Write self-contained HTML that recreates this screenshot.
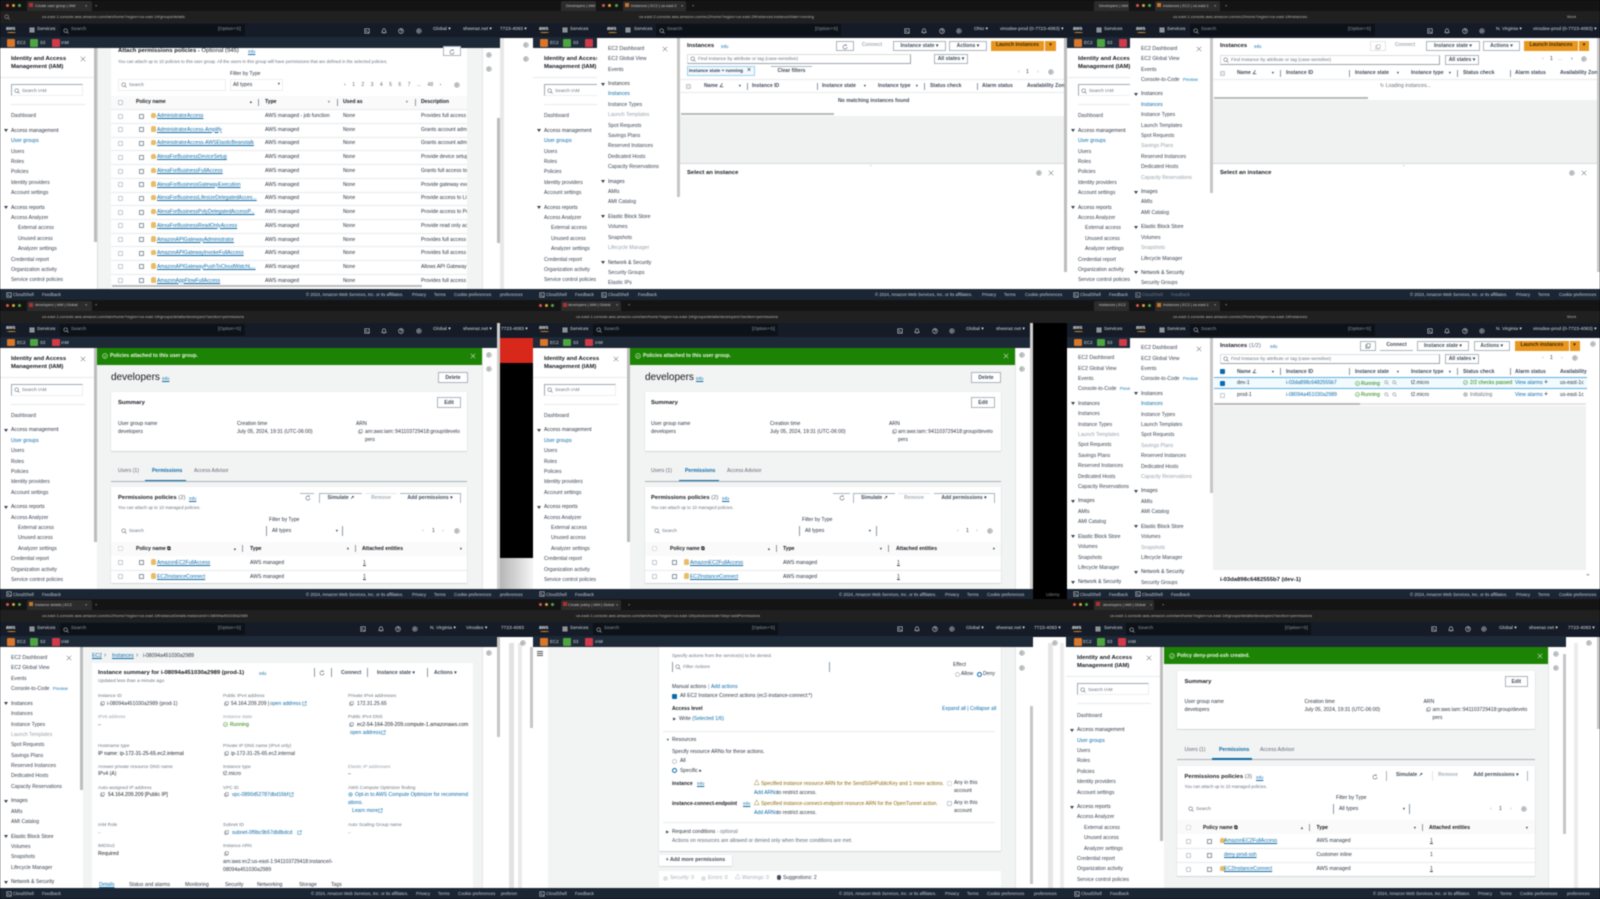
<!DOCTYPE html>
<html lang="en"><head><meta charset="utf-8"><title>AWS console contact sheet</title>
<style>
*{margin:0;padding:0;box-sizing:border-box}
html,body{width:1600px;height:899px;background:#000;overflow:hidden;font-family:"Liberation Sans",sans-serif}
#p{position:absolute;left:0;top:0;width:1600px;height:899px;filter:blur(.4px);overflow:hidden}
.row{position:absolute;left:0;width:1600px;height:300px;overflow:hidden;background:#000}
.w{position:absolute;top:0;height:300px;overflow:hidden}
.row s,.row a,.row b,.row i,.row svg,.row em{position:absolute;display:block;white-space:nowrap;font-size:5.1px;line-height:8px;color:#2b3440;text-decoration:none;font-style:normal}
.row b{font-weight:700;color:#16191f}
.row a{color:#0b6aa8;text-decoration:underline;text-decoration-thickness:.4px}
.row svg{width:6px;height:6px;fill:none;stroke:currentColor;stroke-width:1.4;color:#545f6b}
.row .h{font-size:5.9px}
.tb{left:0;top:0;width:1600px;height:11px;background:#141414}
.ab{left:0;top:11px;width:1600px;height:12px;background:#202020}
.l{width:3px;height:3px;top:4px;border-radius:50%}
.tab{top:1px;height:10px;background:#2c2c2c;border-radius:2px 2px 0 0}
.row .tt{font-size:3.8px;color:#c4c4c4;top:1.5px}
.row .ur{font-size:3.9px;color:#b8b8b8;top:13px;letter-spacing:.05px}
.row .nb{left:0;top:23px;height:14px;width:100%;background:#151c27}
.row .fb{left:0;top:37px;height:11px;width:100%;background:#1d2937}
.row .ft{left:0;top:289px;height:11px;width:100%;background:#1b2634}
.row .sr{left:60px;top:24px;width:185px;height:12px;background:#0d1219}
.row .n{color:#d5dbdb;top:26px;font-size:4.8px}
.row .nf{color:#d5dbdb;top:39px;font-size:4.4px}
.row .fo{color:#c5ccd3;top:291px;font-size:4.3px}
.row .aw{left:6px;top:24.5px;color:#e8e8e8;font-weight:700;font-size:5px}
.sm{left:7px;top:31.5px;width:9px;height:1px;background:#d88f2a;border-radius:50%}
.row .wi{color:#d5dbdb}
.ico{top:39px;width:7.5px;height:7.5px;border-radius:1px}
.nvl{position:absolute;left:0;width:80px}
.nvl p{height:10.4px;line-height:10.4px;padding-left:11px;font-size:5.1px;color:#38424f;white-space:nowrap;position:relative}
.nvl h6{margin-top:4.1px;height:10.4px;line-height:10.4px;padding-left:11px;font-size:5.1px;font-weight:400;color:#2b3440;white-space:nowrap;position:relative}
.nvl h6:before{content:"";position:absolute;left:4px;top:3.5px;border:2px solid transparent;border-top:3px solid #38424f;border-bottom:0}
.nvl .a{color:#0b6aa8}.nvl .in{padding-left:18px}.nvl .f{color:#98a2ab}
.row .nvl p em{position:static;display:inline;color:#0b7abf;font-size:4.2px;line-height:10.4px;margin-left:2px}
.btn{font-weight:700;text-align:center;border:.6px solid #aab4bd;background:#fff;color:#414d5c!important}
.off{color:#a6afb7!important;border-color:#e2e6e9}
.or{background:#e8961e;color:#3f2a08!important;font-weight:700;text-align:center}
.ln{height:.6px;background:#e8ebed}
.dv{width:.7px;height:7px;background:#8d99a5}
.row .d{font-size:3.8px;color:#414d5c}
.row .m{color:#6b7580;font-size:4.7px}
.ck{width:5px;height:5px;border:.6px solid #c0c8cf;background:#fff;border-radius:1px}
.gd{width:5px;height:5.5px;background:#e8bd68;border-radius:2px 2px 1px 1px}
.pi{width:5px;height:5px;border:.6px solid #8a95a0}
.gn{left:97px;top:48px;width:385px;height:17px;background:#1c8304}
</style></head><body>
<svg width="0" height="0" style="position:absolute"><defs>
<symbol id="s" viewBox="0 0 16 16"><circle cx="7" cy="7" r="4.8"/><path d="M10.5 10.5 15 15"/></symbol>
<symbol id="x" viewBox="0 0 16 16"><path d="M2 2l12 12M14 2 2 14"/></symbol>
<symbol id="g" viewBox="0 0 16 16"><circle cx="8" cy="8" r="6"/><circle cx="8" cy="8" r="2.2"/></symbol>
<symbol id="h" viewBox="0 0 16 16"><circle cx="8" cy="8" r="6.5"/><path d="M6 6.5c0-3 4.5-3 4.5 0 0 2-2.500 2-2.500 4"/></symbol>
<symbol id="b" viewBox="0 0 16 16"><path d="M8 2c-3 0-4 2-4 5 0 3-2 4-2 5h12c0-1-2-2-2-5 0-3-1-5-4-5zM6.500 14h3"/></symbol>
<symbol id="t" viewBox="0 0 16 16"><rect x="2" y="2" width="12" height="12"/><path d="M5 6l2.500 2L5 10M8.500 11H12"/></symbol>
<symbol id="r" viewBox="0 0 16 16"><path d="M13.500 8A5.500 5.500 0 1 1 11.500 3.800M11.500 1v3h-3"/></symbol>
<symbol id="c" viewBox="0 0 16 16"><rect x="5" y="2" width="9" height="9"/><path d="M5 5H2v9h9v-3"/></symbol>
<symbol id="e" viewBox="0 0 16 16"><path d="M7 3H2v11h11V9M9 2h5v5M14 2 7 9"/></symbol>
<symbol id="k" viewBox="0 0 16 16"><circle cx="8" cy="8" r="6.500"/><path d="M5 8l2.200 2.200L11 6"/></symbol>
<symbol id="m" viewBox="0 0 16 16"><path d="M2 2h3v3H2zM6.500 2h3v3h-3zM11 2h3v3h-3zM2 6.500h3v3H2zM6.500 6.500h3v3h-3zM11 6.500h3v3h-3zM2 11h3v3H2zM6.500 11h3v3h-3zM11 11h3v3h-3z"/></symbol>
</defs></svg>
<div id="p">

<!-- ROW 1 -->
<div class="row" style="top:0">
<i class="tb"></i><i class="ab"></i>
<i class="l" style="left:6px;background:#d9584c"></i><i class="l" style="left:12px;background:#d9a53c"></i><i class="l" style="left:18px;background:#4fa84a"></i>
<i class="tab" style="left:27px;width:65px"></i><i style="left:29px;top:3px;width:4px;height:4px;background:#b03030"></i><s class="tt" style="left:35px">Create user group | IAM</s><s class="tt" style="left:85px">×</s><s class="tt" style="left:95px">+</s>
<s class="ur" style="left:42px">us-east-1.console.aws.amazon.com/iam/home?region=us-east-1#/groups/details</s>
<svg style="left:4px;top:14px;color:#aaa"><use href="#s"/></svg>
<i class="tab" style="left:561px;width:35px"></i><s class="tt" style="left:566px">Developers | IAM</s>
<i class="l" style="left:602px;background:#d9584c"></i><i class="l" style="left:608px;background:#d9a53c"></i><i class="l" style="left:615px;background:#4fa84a"></i>
<i class="tab" style="left:623px;width:63px"></i><i style="left:625px;top:3px;width:4px;height:4px;background:#c8742a"></i><s class="tt" style="left:631px">Instances | EC2 | us-east-2</s><s class="tt" style="left:681px">×</s><s class="tt" style="left:692px">+</s>
<s class="ur" style="left:639px">us-east-2.console.aws.amazon.com/ec2/home?region=us-east-2#Instances:instanceState=running</s>
<i class="tab" style="left:1094px;width:35px"></i><s class="tt" style="left:1099px">Developers | IAM</s>
<i class="l" style="left:1136px;background:#d9584c"></i><i class="l" style="left:1142px;background:#d9a53c"></i><i class="l" style="left:1148px;background:#4fa84a"></i>
<i class="tab" style="left:1155px;width:65px"></i><i style="left:1157px;top:3px;width:4px;height:4px;background:#c8742a"></i><s class="tt" style="left:1163px">Instances | EC2 | us-east-1</s><s class="tt" style="left:1214px">×</s><s class="tt" style="left:1225px">+</s>
<s class="ur" style="left:1173px">us-east-1.console.aws.amazon.com/ec2/home?region=us-east-1#Instances:</s>
<s class="ur" style="left:1567px">Work</s>

<!-- strip 500-533 -->
<i style="left:500px;top:23px;width:33px;height:15px;background:#151c27"></i><i style="left:500px;top:38px;width:33px;height:251px;background:#fff"></i><i style="left:500px;top:38px;width:4px;height:251px;background:#e8e8e8"></i><i style="left:500px;top:289px;width:40px;height:11px;background:#1b2634"></i>
<s class="n wi" style="left:500px">7723-4083 ▾</s>
<svg style="left:523px;top:42px"><use href="#g"/></svg><svg style="left:523px;top:56px"><use href="#g"/></svg>
<s class="fo" style="left:500px">preferences</s>

<!-- win1 -->
<div class="w" style="left:0;width:500px">
<i style="left:0;top:48px;width:500px;height:241px;background:#fff"></i>
<i class="nb"></i><i class="fb"></i>
<s class="aw">aws</s><i class="sm"></i>
<svg style="left:29px;top:27px;color:#e6e6e6;stroke-width:1.200"><use href="#m"/></svg><s class="n" style="left:37px">Services</s>
<i class="sr"></i><svg style="left:63px;top:27.500px;color:#ccc"><use href="#s"/></svg><s class="n" style="left:71px;color:#8b96a1">Search</s><s class="n" style="left:218px;color:#8b96a1">[Option+S]</s>
<svg style="left:364px;top:28px;color:#e6e6e6"><use href="#t"/></svg><svg style="left:381px;top:28px;color:#e6e6e6"><use href="#b"/></svg><svg style="left:398px;top:28px;color:#e6e6e6"><use href="#h"/></svg><svg style="left:416px;top:28px;color:#e6e6e6"><use href="#g"/></svg>
<s class="n" style="left:433px">Global ▾</s><s class="n" style="left:463px">sheeraz.net ▾</s>
<i class="ico" style="left:7px;background:#d9772a"></i><s class="nf" style="left:17px">EC2</s><i class="ico" style="left:30px;background:#4fa53f"></i><s class="nf" style="left:40px">S3</s><i class="ico" style="left:52px;background:#d23a4a"></i><s class="nf" style="left:61px">IAM</s>

<b class="h" style="left:11px;top:55px">Identity and Access</b><b class="h" style="left:11px;top:63px">Management (IAM)</b>
<svg style="left:80px;top:56px"><use href="#x"/></svg>
<i class="ln" style="left:0;top:77px;width:94px"></i>
<i style="left:11px;top:84px;width:72px;height:12px;border:.6px solid #a0aab4;border-bottom-color:#eee;border-right-color:#eee"></i><svg style="left:14px;top:87.500px"><use href="#s"/></svg><s class="m" style="left:22px;top:86.500px">Search IAM</s>
<i class="ln" style="left:11px;top:104px;width:74px"></i>
<div class="nvl" style="top:111.300px"><p>Dashboard</p><h6>Access management</h6><p class="a">User groups</p><p>Users</p><p>Roles</p><p>Policies</p><p>Identity providers</p><p>Account settings</p><h6>Access reports</h6><p>Access Analyzer</p><p class="in">External access</p><p class="in">Unused access</p><p class="in">Analyzer settings</p><p>Credential report</p><p>Organization activity</p><p>Service control policies</p></div>
<i style="left:94px;top:48px;width:2.500px;height:194px;background:#bcbcbc"></i><i style="left:97px;top:48px;width:.7px;height:241px;background:#ddd"></i>
<i style="left:98px;top:48px;width:384px;height:241px;background:#f2f3f3"></i>
<i style="left:111px;top:48px;width:356px;height:241px;background:#fff"></i>
<b class="h" style="left:118px;top:47px">Attach permissions policies - <span style="font-weight:400">Optional (945)</span></b><a style="left:248px;top:48px;font-size:4.400px">Info</a>
<s class="m" style="left:118px;top:57.500px;font-size:4.400px">You can attach up to 10 policies to this user group. All the users in this group will have permissions that are defined in the selected policies.</s>
<i class="btn" style="left:443px;top:46px;width:18px;height:10px"></i><svg style="left:449px;top:48.500px"><use href="#r"/></svg>
<s style="left:230px;top:70px">Filter by Type</s>
<i style="left:118px;top:79px;width:108px;height:12px;background:#fff;border:.6px solid #eee"></i><svg style="left:121px;top:81.500px"><use href="#s"/></svg><s class="m" style="left:129px;top:80.500px">Search</s>
<i style="left:230px;top:79px;width:53px;height:12px;border:.6px solid #eee"></i><s style="left:233px;top:80.500px">All types</s><s class="d" style="left:277px;top:80px">▼</s>
<s style="left:344px;top:80.500px;word-spacing:5px;color:#5f6b77">‹ 1 2 3 4 5 6 7 ... 48 ›</s><svg style="left:454px;top:81.500px"><use href="#g"/></svg>
<i style="left:111px;top:96px;width:356px;height:13px;background:#fafafa"></i>
<i class="ck" style="left:118px;top:99.500px"></i><b style="left:136px;top:98px">Policy name</b><s class="d" style="left:249px;top:98px">▲</s><i class="dv" style="left:258px;top:98.500px"></i>
<b style="left:265px;top:98px">Type</b><s class="d" style="left:327px;top:98px;color:#888">▼</s><i class="dv" style="left:337px;top:98.500px"></i><b style="left:343px;top:98px">Used as</b><s class="d" style="left:405px;top:98px;color:#888">▼</s><i class="dv" style="left:415px;top:98.500px"></i><b style="left:421px;top:98px">Description</b>
<i class="ln" style="left:111px;top:109px;width:356px"></i><i class="ln" style="left:111px;top:123px;width:356px"></i><i class="ln" style="left:111px;top:136.500px;width:356px"></i><i class="ln" style="left:111px;top:150px;width:356px"></i><i class="ln" style="left:111px;top:164px;width:356px"></i><i class="ln" style="left:111px;top:178px;width:356px"></i><i class="ln" style="left:111px;top:191.500px;width:356px"></i><i class="ln" style="left:111px;top:205px;width:356px"></i><i class="ln" style="left:111px;top:219px;width:356px"></i><i class="ln" style="left:111px;top:232.500px;width:356px"></i><i class="ln" style="left:111px;top:246px;width:356px"></i><i class="ln" style="left:111px;top:260px;width:356px"></i><i class="ln" style="left:111px;top:273.500px;width:356px"></i>

<i class="ck" style="left:118px;top:113.500px"></i><i class="pi" style="left:139px;top:113.500px"></i><i class="gd" style="left:151px;top:112.500px"></i><a style="left:157px;top:112px">AdministratorAccess</a><s style="left:265px;top:112px">AWS managed - job function</s><s style="left:343px;top:112px">None</s><s style="left:421px;top:112px;width:46px;overflow:hidden">Provides full access to</s>
<i class="ck" style="left:118px;top:127px"></i><i class="pi" style="left:139px;top:127px"></i><i class="gd" style="left:151px;top:126px"></i><a style="left:157px;top:125.500px">AdministratorAccess-Amplify</a><s style="left:265px;top:125.500px">AWS managed</s><s style="left:343px;top:125.500px">None</s><s style="left:421px;top:125.500px;width:46px;overflow:hidden">Grants account administrative</s>
<i class="ck" style="left:118px;top:140.500px"></i><i class="pi" style="left:139px;top:140.500px"></i><i class="gd" style="left:151px;top:139.500px"></i><a style="left:157px;top:139px">AdministratorAccess-AWSElasticBeanstalk</a><s style="left:265px;top:139px">AWS managed</s><s style="left:343px;top:139px">None</s><s style="left:421px;top:139px;width:46px;overflow:hidden">Grants account administrative</s>
<i class="ck" style="left:118px;top:154.500px"></i><i class="pi" style="left:139px;top:154.500px"></i><i class="gd" style="left:151px;top:153.500px"></i><a style="left:157px;top:153px">AlexaForBusinessDeviceSetup</a><s style="left:265px;top:153px">AWS managed</s><s style="left:343px;top:153px">None</s><s style="left:421px;top:153px;width:46px;overflow:hidden">Provide device setup</s>
<i class="ck" style="left:118px;top:168.500px"></i><i class="pi" style="left:139px;top:168.500px"></i><i class="gd" style="left:151px;top:167.500px"></i><a style="left:157px;top:167px">AlexaForBusinessFullAccess</a><s style="left:265px;top:167px">AWS managed</s><s style="left:343px;top:167px">None</s><s style="left:421px;top:167px;width:46px;overflow:hidden">Grants full access to Alexa</s>
<i class="ck" style="left:118px;top:182px"></i><i class="pi" style="left:139px;top:182px"></i><i class="gd" style="left:151px;top:181px"></i><a style="left:157px;top:180.500px">AlexaForBusinessGatewayExecution</a><s style="left:265px;top:180.500px">AWS managed</s><s style="left:343px;top:180.500px">None</s><s style="left:421px;top:180.500px;width:46px;overflow:hidden">Provide gateway execution</s>
<i class="ck" style="left:118px;top:195.500px"></i><i class="pi" style="left:139px;top:195.500px"></i><i class="gd" style="left:151px;top:194.500px"></i><a style="left:157px;top:194px">AlexaForBusinessLifesizeDelegatedAcces...</a><s style="left:265px;top:194px">AWS managed</s><s style="left:343px;top:194px">None</s><s style="left:421px;top:194px;width:46px;overflow:hidden">Provide access to Lifesize</s>
<i class="ck" style="left:118px;top:209.500px"></i><i class="pi" style="left:139px;top:209.500px"></i><i class="gd" style="left:151px;top:208.500px"></i><a style="left:157px;top:208px">AlexaForBusinessPolyDelegatedAccessP...</a><s style="left:265px;top:208px">AWS managed</s><s style="left:343px;top:208px">None</s><s style="left:421px;top:208px;width:46px;overflow:hidden">Provide access to Poly</s>
<i class="ck" style="left:118px;top:223px"></i><i class="pi" style="left:139px;top:223px"></i><i class="gd" style="left:151px;top:222px"></i><a style="left:157px;top:221.500px">AlexaForBusinessReadOnlyAccess</a><s style="left:265px;top:221.500px">AWS managed</s><s style="left:343px;top:221.500px">None</s><s style="left:421px;top:221.500px;width:46px;overflow:hidden">Provide read only access</s>
<i class="ck" style="left:118px;top:237px"></i><i class="pi" style="left:139px;top:237px"></i><i class="gd" style="left:151px;top:236px"></i><a style="left:157px;top:235.500px">AmazonAPIGatewayAdministrator</a><s style="left:265px;top:235.500px">AWS managed</s><s style="left:343px;top:235.500px">None</s><s style="left:421px;top:235.500px;width:46px;overflow:hidden">Provides full access to</s>
<i class="ck" style="left:118px;top:250.500px"></i><i class="pi" style="left:139px;top:250.500px"></i><i class="gd" style="left:151px;top:249.500px"></i><a style="left:157px;top:249px">AmazonAPIGatewayInvokeFullAccess</a><s style="left:265px;top:249px">AWS managed</s><s style="left:343px;top:249px">None</s><s style="left:421px;top:249px;width:46px;overflow:hidden">Provides full access to</s>
<i class="ck" style="left:118px;top:264px"></i><i class="pi" style="left:139px;top:264px"></i><i class="gd" style="left:151px;top:263px"></i><a style="left:157px;top:262.500px">AmazonAPIGatewayPushToCloudWatchL...</a><s style="left:265px;top:262.500px">AWS managed</s><s style="left:343px;top:262.500px">None</s><s style="left:421px;top:262.500px;width:46px;overflow:hidden">Allows API Gateway to</s>
<i class="ck" style="left:118px;top:278px"></i><i class="pi" style="left:139px;top:278px"></i><i class="gd" style="left:151px;top:277px"></i><a style="left:157px;top:276.500px">AmazonAppFlowFullAccess</a><s style="left:265px;top:276.500px">AWS managed</s><s style="left:343px;top:276.500px">None</s><s style="left:421px;top:276.500px;width:46px;overflow:hidden">Provides full access to</s>
<i style="left:112px;top:285px;width:310px;height:2px;background:#bbb"></i>
<i style="left:482px;top:48px;width:15px;height:241px;background:#fff;border-left:.6px solid #e5e5e5"></i>
<svg style="left:486px;top:52px"><use href="#g"/></svg><svg style="left:486px;top:66px"><use href="#g"/></svg>
<i style="left:497px;top:118px;width:2.500px;height:125px;background:#bcbcbc"></i>
<i class="ft"></i><svg style="left:6px;top:291.500px;color:#ddd"><use href="#t"/></svg><s class="fo" style="left:13px">CloudShell</s><s class="fo" style="left:42px">Feedback</s>
<s class="fo" style="left:306px">© 2024, Amazon Web Services, Inc. or its affiliates.</s><s class="fo" style="left:412px">Privacy</s><s class="fo" style="left:434px">Terms</s><s class="fo" style="left:454px">Cookie preferences</s>
</div>

<!-- win2 behind (IAM clip) -->
<div class="w" style="left:533px;width:64px">
<i style="left:0;top:38px;width:64px;height:251px;background:#fff"></i><i class="nb"></i><i class="fb"></i>
<s class="aw">aws</s><i class="sm"></i><svg style="left:29px;top:27px;color:#e6e6e6;stroke-width:1.200"><use href="#m"/></svg><s class="n" style="left:37px">Services</s>
<i class="ico" style="left:7px;background:#d9772a"></i><s class="nf" style="left:17px">EC2</s><i class="ico" style="left:30px;background:#4fa53f"></i><s class="nf" style="left:40px">S3</s><i class="ico" style="left:52px;background:#d23a4a"></i>
<b class="h" style="left:11px;top:55px">Identity and Access</b><b class="h" style="left:11px;top:63px">Management (IAM)</b>
<i class="ln" style="left:0;top:77px;width:64px"></i>
<i style="left:11px;top:84px;width:60px;height:12px;border:.6px solid #a0aab4;border-bottom-color:#eee"></i><svg style="left:14px;top:87.500px"><use href="#s"/></svg><s class="m" style="left:22px;top:86.500px">Search IAM</s>
<i class="ln" style="left:11px;top:104px;width:60px"></i>
<div class="nvl" style="top:111.300px"><p>Dashboard</p><h6>Access management</h6><p class="a">User groups</p><p>Users</p><p>Roles</p><p>Policies</p><p>Identity providers</p><p>Account settings</p><h6>Access reports</h6><p>Access Analyzer</p><p class="in">External access</p><p class="in">Unused access</p><p class="in">Analyzer settings</p><p>Credential report</p><p>Organization activity</p><p>Service control policies</p></div>
<i class="ft"></i><svg style="left:6px;top:291.500px;color:#ddd"><use href="#t"/></svg><s class="fo" style="left:13px">CloudShell</s><s class="fo" style="left:42px">Feedback</s>
</div>

<!-- win2 front EC2 -->
<div class="w" style="left:597px;width:470px">
<i style="left:0;top:38px;width:470px;height:251px;background:#fff"></i><i class="nb" style="height:15px"></i>
<s class="aw" style="left:10px">aws</s><i class="sm" style="left:11px"></i><svg style="left:28px;top:27px;color:#e6e6e6;stroke-width:1.200"><use href="#m"/></svg><s class="n" style="left:37px">Services</s>
<i class="sr" style="left:59px"></i><svg style="left:62px;top:27.500px;color:#ccc"><use href="#s"/></svg><s class="n" style="left:70px;color:#8b96a1">Search</s><s class="n" style="left:218px;color:#8b96a1">[Option+S]</s>
<svg style="left:307px;top:28px;color:#e6e6e6"><use href="#t"/></svg><svg style="left:324px;top:28px;color:#e6e6e6"><use href="#b"/></svg><svg style="left:342px;top:28px;color:#e6e6e6"><use href="#h"/></svg><svg style="left:359px;top:28px;color:#e6e6e6"><use href="#g"/></svg>
<s class="n" style="left:377px">Ohio ▾</s><s class="n" style="left:403px">vinodee-prod (0-7723-4083) ▾</s>
<div class="nvl" style="top:43.800px"><p>EC2 Dashboard</p><p>EC2 Global View</p><p>Events</p><h6>Instances</h6><p class="a">Instances</p><p>Instance Types</p><p class="f">Launch Templates</p><p>Spot Requests</p><p>Savings Plans</p><p>Reserved Instances</p><p>Dedicated Hosts</p><p>Capacity Reservations</p><h6>Images</h6><p>AMIs</p><p>AMI Catalog</p><h6>Elastic Block Store</h6><p>Volumes</p><p>Snapshots</p><p class="f">Lifecycle Manager</p><h6>Network &amp; Security</h6><p>Security Groups</p><p>Elastic IPs</p></div>
<svg style="left:65px;top:46px"><use href="#x"/></svg>
<i style="left:80px;top:38px;width:2.500px;height:159px;background:#c6c6c6"></i>
<b class="h" style="left:90px;top:42px">Instances</b><a style="left:124px;top:43px;font-size:4.400px;text-decoration:none">Info</a>
<i class="btn" style="left:239px;top:41px;width:18px;height:10px"></i><svg style="left:245px;top:43.500px"><use href="#r"/></svg>
<s class="btn off" style="left:262px;top:41px;width:26px;height:10px;border:0">Connect</s>
<s class="btn" style="left:296px;top:41px;width:53px;height:10px">Instance state ▾</s>
<s class="btn" style="left:352px;top:41px;width:38px;height:10px">Actions ▾</s>
<s class="or" style="left:394px;top:41px;width:53px;height:10px">Launch instances</s><s class="or" style="left:448px;top:41px;width:11px;height:10px">▾</s>
<i style="left:90px;top:54px;width:224px;height:10px;border:.6px solid #9aa5af;border-left-color:#ddd;border-top-color:#ddd"></i><svg style="left:93px;top:56px"><use href="#s"/></svg><s class="m" style="left:101px;top:55px">Find Instance by attribute or tag (case-sensitive)</s>
<s class="btn" style="left:337px;top:54px;width:34px;height:10px">All states ▾</s>
<i style="left:90px;top:66px;width:68px;height:10px;background:#f1faff;border:.6px solid #9fd0ec"></i><s style="left:92px;top:67px;font-weight:700;color:#32404f;font-size:4.700px">Instance state = running</s><s style="left:150px;top:67px;font-size:7px">×</s>
<s class="btn" style="left:174px;top:66px;width:41px;height:10px;border-left:0;border-right:0;border-bottom:0">Clear filters</s>
<s style="left:421px;top:68px;color:#aaa">‹</s><s style="left:429px;top:68px">1</s><s style="left:440px;top:68px;color:#aaa">›</s><svg style="left:451px;top:69px"><use href="#g"/></svg>
<i class="ln" style="left:83px;top:79px;width:387px"></i>
<i class="ck" style="left:89px;top:83.500px;background:#e9ebed"></i>
<b style="left:107px;top:82px;color:#414d5c">Name ∠</b><s class="d" style="left:141px;top:82px">▼</s><i class="dv" style="left:150px;top:83px"></i><b style="left:155px;top:82px;color:#414d5c">Instance ID</b><i class="dv" style="left:220px;top:83px"></i><b style="left:225px;top:82px;color:#414d5c">Instance state</b><s class="d" style="left:266px;top:82px">▼</s><b style="left:281px;top:82px;color:#414d5c">Instance type</b><s class="d" style="left:318px;top:82px">▼</s><i class="dv" style="left:327px;top:83px"></i><b style="left:333px;top:82px;color:#414d5c">Status check</b><i class="dv" style="left:380px;top:83px"></i><b style="left:385px;top:82px;color:#414d5c">Alarm status</b><b style="left:430px;top:82px;color:#414d5c">Availability Zon</b>
<i class="ln" style="left:83px;top:92px;width:387px"></i>
<b style="left:241px;top:97px;color:#414d5c">No matching instances found</b>
<i style="left:84px;top:113px;width:153px;height:2px;background:#b8b8b8"></i>
<i style="left:83px;top:115.500px;width:387px;height:48px;background:#f0f1f1"></i>
<i class="ln" style="left:83px;top:163px;width:387px;background:#d5dbdb"></i>
<s class="d" style="left:272px;top:163px;color:#879596">⌃</s>
<b class="h" style="left:90px;top:169px">Select an instance</b>
<svg style="left:439px;top:170px"><use href="#g"/></svg><svg style="left:451px;top:170px"><use href="#x"/></svg>
<i style="left:467px;top:38px;width:2.500px;height:234px;background:#bdbdbd"></i>
<i class="ft"></i><svg style="left:4px;top:291.500px;color:#ddd"><use href="#t"/></svg><s class="fo" style="left:11px">CloudShell</s><s class="fo" style="left:41px">Feedback</s>
<s class="fo" style="left:278px">© 2024, Amazon Web Services, Inc. or its affiliates.</s><s class="fo" style="left:385px">Privacy</s><s class="fo" style="left:407px">Terms</s><s class="fo" style="left:428px">Cookie preferences</s>
</div>

<!-- win3 behind IAM -->
<div class="w" style="left:1067px;width:63px">
<i style="left:0;top:38px;width:63px;height:251px;background:#fff"></i><i class="nb"></i><i class="fb"></i>
<s class="aw">aws</s><i class="sm"></i><svg style="left:29px;top:27px;color:#e6e6e6;stroke-width:1.200"><use href="#m"/></svg><s class="n" style="left:37px">Services</s>
<i class="ico" style="left:7px;background:#d9772a"></i><s class="nf" style="left:17px">EC2</s><i class="ico" style="left:30px;background:#4fa53f"></i><s class="nf" style="left:40px">S3</s><i class="ico" style="left:52px;background:#d23a4a"></i>
<b class="h" style="left:11px;top:55px">Identity and Access</b><b class="h" style="left:11px;top:63px">Management (IAM)</b>
<i class="ln" style="left:0;top:77px;width:64px"></i>
<i style="left:11px;top:84px;width:60px;height:12px;border:.6px solid #a0aab4;border-bottom-color:#eee"></i><svg style="left:14px;top:87.500px"><use href="#s"/></svg><s class="m" style="left:22px;top:86.500px">Search IAM</s>
<i class="ln" style="left:11px;top:104px;width:60px"></i>
<div class="nvl" style="top:111.300px"><p>Dashboard</p><h6>Access management</h6><p class="a">User groups</p><p>Users</p><p>Roles</p><p>Policies</p><p>Identity providers</p><p>Account settings</p><h6>Access reports</h6><p>Access Analyzer</p><p class="in">External access</p><p class="in">Unused access</p><p class="in">Analyzer settings</p><p>Credential report</p><p>Organization activity</p><p>Service control policies</p></div>
<i class="ft"></i><svg style="left:6px;top:291.500px;color:#ddd"><use href="#t"/></svg><s class="fo" style="left:13px">CloudShell</s><s class="fo" style="left:42px">Feedback</s>
</div>

<!-- win3 front EC2 -->
<div class="w" style="left:1130px;width:470px">
<i style="left:0;top:38px;width:470px;height:251px;background:#fff"></i><i class="nb" style="height:15px"></i>
<s class="aw">aws</s><i class="sm"></i><svg style="left:29px;top:27px;color:#e6e6e6;stroke-width:1.200"><use href="#m"/></svg><s class="n" style="left:37px">Services</s>
<i class="sr"></i><svg style="left:63px;top:27.500px;color:#ccc"><use href="#s"/></svg><s class="n" style="left:71px;color:#8b96a1">Search</s><s class="n" style="left:218px;color:#8b96a1">[Option+S]</s>
<svg style="left:297px;top:28px;color:#e6e6e6"><use href="#t"/></svg><svg style="left:314px;top:28px;color:#e6e6e6"><use href="#b"/></svg><svg style="left:332px;top:28px;color:#e6e6e6"><use href="#h"/></svg><svg style="left:349px;top:28px;color:#e6e6e6"><use href="#g"/></svg>
<s class="n" style="left:366px">N. Virginia ▾</s><s class="n" style="left:403px">vinodee-prod (0-7723-4083) ▾</s>
<div class="nvl" style="top:43.800px"><p>EC2 Dashboard</p><p>EC2 Global View</p><p>Events</p><p>Console-to-Code <em>Preview</em></p><h6>Instances</h6><p class="a">Instances</p><p>Instance Types</p><p>Launch Templates</p><p>Spot Requests</p><p class="f">Savings Plans</p><p>Reserved Instances</p><p>Dedicated Hosts</p><p class="f">Capacity Reservations</p><h6>Images</h6><p>AMIs</p><p>AMI Catalog</p><h6>Elastic Block Store</h6><p>Volumes</p><p class="f">Snapshots</p><p>Lifecycle Manager</p><h6>Network &amp; Security</h6><p>Security Groups</p></div>
<svg style="left:66px;top:46px"><use href="#x"/></svg>
<i style="left:80px;top:38px;width:2.500px;height:155px;background:#c6c6c6"></i>
<b class="h" style="left:90px;top:42px">Instances</b><a style="left:124px;top:43px;font-size:4.400px;text-decoration:none">Info</a>
<i class="btn off" style="left:240px;top:41px;width:16px;height:10px"></i><svg style="left:245px;top:43.500px;color:#aaa"><use href="#c"/></svg>
<s class="btn off" style="left:262px;top:41px;width:26px;height:10px;border:0">Connect</s>
<s class="btn" style="left:296px;top:41px;width:54px;height:10px">Instance state ▾</s>
<s class="btn" style="left:353px;top:41px;width:37px;height:10px">Actions ▾</s>
<s class="or" style="left:394px;top:41px;width:54px;height:10px">Launch instances</s><s class="or" style="left:449px;top:41px;width:10px;height:10px">▾</s>
<i style="left:90px;top:55px;width:220px;height:10px;border:.6px solid #9aa5af;border-left-color:#ddd;border-top-color:#ddd"></i><svg style="left:93px;top:57px"><use href="#s"/></svg><s class="m" style="left:101px;top:56px">Find Instance by attribute or tag (case-sensitive)</s>
<s class="btn" style="left:315px;top:55px;width:34px;height:10px">All states ▾</s>
<s style="left:412px;top:55px;color:#aaa">‹</s><s style="left:420px;top:55px">1</s><s style="left:428px;top:55px;color:#999">...</s><s style="left:441px;top:55px">›</s><svg style="left:451px;top:55.500px"><use href="#g"/></svg>
<i class="ck" style="left:90px;top:70.500px;background:#e9ebed"></i>
<b style="left:107px;top:69px;color:#414d5c">Name ∠</b><s class="d" style="left:141px;top:69px">▼</s><i class="dv" style="left:150px;top:69.500px"></i><b style="left:156px;top:69px;color:#414d5c">Instance ID</b><i class="dv" style="left:219px;top:69.500px"></i><b style="left:225px;top:69px;color:#414d5c">Instance state</b><s class="d" style="left:266px;top:69px">▼</s><b style="left:281px;top:69px;color:#414d5c">Instance type</b><s class="d" style="left:318px;top:69px">▼</s><i class="dv" style="left:327px;top:69.500px"></i><b style="left:333px;top:69px;color:#414d5c">Status check</b><i class="dv" style="left:380px;top:69.500px"></i><b style="left:385px;top:69px;color:#414d5c">Alarm status</b><b style="left:430px;top:69px;color:#414d5c">Availability Zon</b>
<i class="ln" style="left:83px;top:79px;width:387px"></i>
<s style="left:250px;top:82px;color:#687078">↻ Loading instances...</s>
<i style="left:84px;top:96.500px;width:154px;height:2px;background:#b8b8b8"></i>
<i style="left:83px;top:100px;width:384px;height:63px;background:#f0f1f1"></i>
<i class="ln" style="left:83px;top:163px;width:387px;background:#d5dbdb"></i>
<s class="d" style="left:272px;top:163px;color:#879596">⌃</s>
<b class="h" style="left:90px;top:169px">Select an instance</b>
<svg style="left:439px;top:170px"><use href="#g"/></svg><svg style="left:451px;top:170px"><use href="#x"/></svg>
<i style="left:467px;top:38px;width:2.500px;height:234px;background:#c8c8c8"></i>
<i class="ft"></i><svg style="left:5px;top:291.500px;color:#aaa"><use href="#t"/></svg><s class="fo" style="left:12px;color:#6d7884">CloudShell</s><s class="fo" style="left:41px;color:#6d7884">Feedback</s>
<s class="fo" style="left:280px">© 2024, Amazon Web Services, Inc. or its affiliates.</s><s class="fo" style="left:386px">Privacy</s><s class="fo" style="left:408px">Terms</s><s class="fo" style="left:429px">Cookie preferences</s>
</div>
</div>

<!-- ROW 2 -->
<div class="row" style="top:299.700px">
<i class="tb"></i><i class="ab"></i>
<i class="l" style="left:6px;background:#d9584c"></i><i class="l" style="left:12px;background:#d9a53c"></i><i class="l" style="left:18px;background:#4fa84a"></i>
<i class="tab" style="left:27px;width:65px"></i><i style="left:29px;top:3px;width:4px;height:4px;background:#b03030"></i><s class="tt" style="left:35px">developers | IAM | Global</s><s class="tt" style="left:85px">×</s><s class="tt" style="left:95px">+</s>
<s class="ur" style="left:42px">us-east-1.console.aws.amazon.com/iam/home?region=us-east-1#/groups/details/developers?section=permissions</s>
<i class="l" style="left:539px;background:#d9584c"></i><i class="l" style="left:545px;background:#d9a53c"></i><i class="l" style="left:551px;background:#4fa84a"></i>
<i class="tab" style="left:561px;width:60px"></i><i style="left:563px;top:3px;width:4px;height:4px;background:#b03030"></i><s class="tt" style="left:568px">developers | IAM | Global</s><s class="tt" style="left:616px">×</s><s class="tt" style="left:628px">+</s>
<s class="ur" style="left:576px">us-east-1.console.aws.amazon.com/iam/home?region=us-east-1#/groups/details/developers?section=permissions</s>
<i class="tab" style="left:1094px;width:35px"></i><s class="tt" style="left:1099px">Instances | EC2</s>
<i class="l" style="left:1136px;background:#d9584c"></i><i class="l" style="left:1142px;background:#d9a53c"></i><i class="l" style="left:1148px;background:#4fa84a"></i>
<i class="tab" style="left:1155px;width:65px"></i><i style="left:1157px;top:3px;width:4px;height:4px;background:#c8742a"></i><s class="tt" style="left:1163px">Instances | EC2 | us-east-1</s><s class="tt" style="left:1214px">×</s><s class="tt" style="left:1225px">+</s>
<s class="ur" style="left:1173px">us-east-1.console.aws.amazon.com/ec2/home?region=us-east-1#Instances:</s>
<s class="ur" style="left:1567px">Work</s>
<!-- strip 500-533 -->
<i style="left:500px;top:23px;width:33px;height:15px;background:#151c27"></i><s class="n wi" style="left:501px">7723-4083 ▾</s>
<i style="left:500px;top:38px;width:33px;height:25px;background:#d8281c"></i>
<i style="left:500px;top:258px;width:33px;height:31px;background:linear-gradient(90deg,#b5b5b5,#f5f5f5)"></i>
<i style="left:500px;top:289px;width:40px;height:11px;background:#1b2634"></i><s class="fo" style="left:500px">preferences</s>
<s class="fo" style="left:1046px;color:#8a8a8a">Udemy</s>

<!-- win1 dev -->
<div class="w" style="left:0;width:500px">
<i style="left:0;top:48px;width:500px;height:241px;background:#fff"></i><i class="nb"></i><i class="fb"></i>
<s class="aw">aws</s><i class="sm"></i><svg style="left:29px;top:27px;color:#e6e6e6;stroke-width:1.200"><use href="#m"/></svg><s class="n" style="left:37px">Services</s>
<i class="sr"></i><svg style="left:63px;top:27.500px;color:#ccc"><use href="#s"/></svg><s class="n" style="left:71px;color:#8b96a1">Search</s><s class="n" style="left:218px;color:#8b96a1">[Option+S]</s>
<svg style="left:364px;top:28px;color:#e6e6e6"><use href="#t"/></svg><svg style="left:381px;top:28px;color:#e6e6e6"><use href="#b"/></svg><svg style="left:398px;top:28px;color:#e6e6e6"><use href="#h"/></svg><svg style="left:416px;top:28px;color:#e6e6e6"><use href="#g"/></svg>
<s class="n" style="left:433px">Global ▾</s><s class="n" style="left:463px">sheeraz.net ▾</s>
<i class="ico" style="left:7px;background:#d9772a"></i><s class="nf" style="left:17px">EC2</s><i class="ico" style="left:30px;background:#4fa53f"></i><s class="nf" style="left:40px">S3</s><i class="ico" style="left:52px;background:#d23a4a"></i><s class="nf" style="left:61px">IAM</s>
<b class="h" style="left:11px;top:55px">Identity and Access</b><b class="h" style="left:11px;top:63px">Management (IAM)</b><svg style="left:80px;top:56px"><use href="#x"/></svg>
<i class="ln" style="left:0;top:77px;width:94px"></i>
<i style="left:11px;top:84px;width:72px;height:12px;border:.6px solid #a0aab4;border-bottom-color:#eee;border-right-color:#eee"></i><svg style="left:14px;top:87.500px"><use href="#s"/></svg><s class="m" style="left:22px;top:86.500px">Search IAM</s>
<i class="ln" style="left:11px;top:104px;width:74px"></i>
<div class="nvl" style="top:111.300px"><p>Dashboard</p><h6>Access management</h6><p class="a">User groups</p><p>Users</p><p>Roles</p><p>Policies</p><p>Identity providers</p><p>Account settings</p><h6>Access reports</h6><p>Access Analyzer</p><p class="in">External access</p><p class="in">Unused access</p><p class="in">Analyzer settings</p><p>Credential report</p><p>Organization activity</p><p>Service control policies</p></div>
<i style="left:94px;top:48px;width:2.500px;height:194px;background:#bcbcbc"></i>
<i style="left:97px;top:48px;width:385px;height:241px;background:#f2f3f3"></i>
<i class="gn"></i><svg style="left:102px;top:53.500px;color:#dff5d8"><use href="#k"/></svg><b style="left:110px;top:52.500px;color:#e9f7e4">Policies attached to this user group.</b><svg style="left:470px;top:53.500px;color:#fff"><use href="#x"/></svg>
<s style="left:111px;top:73.500px;font-size:10px;line-height:10px;color:#16191f">developers</s><a style="left:162px;top:75px;font-size:4.400px">Info</a>
<s class="btn" style="left:438px;top:72px;width:30px;height:11px;line-height:10px">Delete</s>
<i style="left:111px;top:92px;width:356px;height:59px;background:#fff;box-shadow:0 .6px 1px #b8bec4"></i>
<b class="h" style="left:118px;top:99px">Summary</b><s class="btn" style="left:437px;top:97px;width:24px;height:11px;line-height:10px">Edit</s>
<s style="left:118px;top:120px">User group name</s><s style="left:118px;top:128px">developers</s>
<s style="left:237px;top:120px">Creation time</s><s style="left:237px;top:128px">July 05, 2024, 19:31 (UTC-06:00)</s>
<s style="left:356px;top:120px">ARN</s><svg style="left:358px;top:129px;width:5px;height:5px"><use href="#c"/></svg><s style="left:365px;top:128px">arn:aws:iam::941103729418:group/develo</s><s style="left:365px;top:136px">pers</s>
<s style="left:118px;top:167px;color:#5f6b77">Users (1)</s><a style="left:152px;top:167px;text-decoration:none;font-weight:700">Permissions</a><s style="left:194px;top:167px;color:#5f6b77">Access Advisor</s>
<i style="left:111px;top:181px;width:356px;height:.7px;background:#a9b2ba"></i><i style="left:145px;top:180px;width:41px;height:1.300px;background:#0b6aa8"></i>
<i style="left:111px;top:187px;width:356px;height:96px;background:#fff;box-shadow:0 .6px 1px #b8bec4"></i>
<b class="h" style="left:118px;top:194px">Permissions policies <span style="font-weight:400;color:#5f6b77">(2)</span></b><a style="left:189px;top:195px;font-size:4.400px">Info</a>
<s class="m" style="left:118px;top:204px;font-size:4.400px">You can attach up to 10 managed policies.</s>
<i class="btn" style="left:300px;top:193px;width:14px;height:10px;border-left:0;border-bottom:0;border-right:0"></i><svg style="left:305px;top:195px"><use href="#r"/></svg>
<s class="btn" style="left:319px;top:193px;width:43px;height:10px;border-bottom:0;border-right:0">Simulate ↗</s>
<s class="btn off" style="left:365px;top:193px;width:32px;height:10px;border-bottom:0;border-left:0;border-right:0">Remove</s>
<s class="btn" style="left:400px;top:193px;width:61px;height:10px;border-left:0;border-bottom:0">Add permissions ▾</s>
<s style="left:269px;top:216px">Filter by Type</s>
<svg style="left:121px;top:228px"><use href="#s"/></svg><s class="m" style="left:129px;top:227px">Search</s>
<i style="left:265.500px;top:226px;width:77px;height:10px;border-left:.7px solid #8d99a5;border-right:.7px solid #8d99a5"></i><s style="left:272px;top:227px">All types</s><s class="d" style="left:335px;top:227px">▼</s>
<s style="left:422px;top:227px;color:#aaa">‹</s><s style="left:432px;top:227px">1</s><s style="left:442px;top:227px;color:#aaa">›</s><svg style="left:454px;top:228px"><use href="#g"/></svg>
<i style="left:111px;top:242px;width:356px;height:14px;background:#fafafa"></i>
<i class="ck" style="left:118px;top:246.500px;border-color:#ddd"></i><b style="left:136px;top:245px">Policy name ⧉</b><s class="d" style="left:233px;top:245px">▲</s><i class="dv" style="left:242px;top:245.500px"></i><b style="left:250px;top:245px">Type</b><s class="d" style="left:346px;top:245px">▼</s><i class="dv" style="left:355px;top:245.500px"></i><b style="left:362px;top:245px">Attached entities</b><s class="d" style="left:459px;top:245px">▼</s>
<i class="ck" style="left:118px;top:260.500px"></i><i class="pi" style="left:139px;top:260.500px"></i><i class="gd" style="left:151px;top:259.500px"></i><a style="left:157px;top:259px">AmazonEC2FullAccess</a><s style="left:250px;top:259px">AWS managed</s><a style="left:363px;top:259px;color:#2b3440">1</a>
<i class="ln" style="left:111px;top:270px;width:356px"></i>
<i class="ck" style="left:118px;top:274.500px"></i><i class="pi" style="left:139px;top:274.500px"></i><i class="gd" style="left:151px;top:273.500px"></i><a style="left:157px;top:273px">EC2InstanceConnect</a><s style="left:250px;top:273px">AWS managed</s><a style="left:363px;top:273px;color:#2b3440">1</a>
<i style="left:482px;top:48px;width:15px;height:241px;background:#fff;border-left:.6px solid #e5e5e5"></i><svg style="left:486px;top:52px"><use href="#g"/></svg><svg style="left:486px;top:66px"><use href="#g"/></svg>
<i style="left:497px;top:23px;width:3px;height:266px;background:#d0d0d0"></i>
<i class="ft"></i><svg style="left:6px;top:291.500px;color:#ddd"><use href="#t"/></svg><s class="fo" style="left:13px">CloudShell</s><s class="fo" style="left:42px">Feedback</s>
<s class="fo" style="left:306px">© 2024, Amazon Web Services, Inc. or its affiliates.</s><s class="fo" style="left:412px">Privacy</s><s class="fo" style="left:434px">Terms</s><s class="fo" style="left:454px">Cookie preferences</s>
</div>

<!-- win2 dev -->
<div class="w" style="left:533px;width:500px">
<i style="left:0;top:48px;width:500px;height:241px;background:#fff"></i><i class="nb"></i><i class="fb"></i>
<s class="aw">aws</s><i class="sm"></i><svg style="left:29px;top:27px;color:#e6e6e6;stroke-width:1.200"><use href="#m"/></svg><s class="n" style="left:37px">Services</s>
<i class="sr"></i><svg style="left:63px;top:27.500px;color:#ccc"><use href="#s"/></svg><s class="n" style="left:71px;color:#8b96a1">Search</s><s class="n" style="left:219px;color:#8b96a1">[Option+S]</s>
<svg style="left:364px;top:28px;color:#e6e6e6"><use href="#t"/></svg><svg style="left:381px;top:28px;color:#e6e6e6"><use href="#b"/></svg><svg style="left:399px;top:28px;color:#e6e6e6"><use href="#h"/></svg><svg style="left:416px;top:28px;color:#e6e6e6"><use href="#g"/></svg>
<s class="n" style="left:433px">Global ▾</s><s class="n" style="left:463px">sheeraz.net ▾</s>
<i class="ico" style="left:7px;background:#d9772a"></i><s class="nf" style="left:17px">EC2</s><i class="ico" style="left:30px;background:#4fa53f"></i><s class="nf" style="left:40px">S3</s><i class="ico" style="left:52px;background:#d23a4a"></i><s class="nf" style="left:62px">IAM</s>
<b class="h" style="left:11px;top:55px">Identity and Access</b><b class="h" style="left:11px;top:63px">Management (IAM)</b><svg style="left:80px;top:56px"><use href="#x"/></svg>
<i class="ln" style="left:0;top:77px;width:94px"></i>
<i style="left:11px;top:84px;width:72px;height:12px;border:.6px solid #a0aab4;border-bottom-color:#eee;border-right-color:#eee"></i><svg style="left:14px;top:87.500px"><use href="#s"/></svg><s class="m" style="left:22px;top:86.500px">Search IAM</s>
<i class="ln" style="left:11px;top:104px;width:74px"></i>
<div class="nvl" style="top:111.300px"><p>Dashboard</p><h6>Access management</h6><p class="a">User groups</p><p>Users</p><p>Roles</p><p>Policies</p><p>Identity providers</p><p>Account settings</p><h6>Access reports</h6><p>Access Analyzer</p><p class="in">External access</p><p class="in">Unused access</p><p class="in">Analyzer settings</p><p>Credential report</p><p>Organization activity</p><p>Service control policies</p></div>
<i style="left:94px;top:48px;width:2.500px;height:194px;background:#bcbcbc"></i>
<i style="left:97px;top:48px;width:385px;height:241px;background:#f2f3f3"></i>
<i class="gn"></i><svg style="left:102px;top:53.500px;color:#dff5d8"><use href="#k"/></svg><b style="left:110px;top:52.500px;color:#e9f7e4">Policies attached to this user group.</b><svg style="left:470px;top:53.500px;color:#fff"><use href="#x"/></svg>
<s style="left:112px;top:73.500px;font-size:10px;line-height:10px;color:#16191f">developers</s><a style="left:163px;top:75px;font-size:4.400px">Info</a>
<s class="btn" style="left:438px;top:72px;width:30px;height:11px;line-height:10px">Delete</s>
<i style="left:112px;top:92px;width:356px;height:59px;background:#fff;box-shadow:0 .6px 1px #b8bec4"></i>
<b class="h" style="left:118px;top:99px">Summary</b><s class="btn" style="left:438px;top:97px;width:24px;height:11px;line-height:10px">Edit</s>
<s style="left:118px;top:120px">User group name</s><s style="left:118px;top:128px">developers</s>
<s style="left:237px;top:120px">Creation time</s><s style="left:237px;top:128px">July 05, 2024, 19:31 (UTC-06:00)</s>
<s style="left:356px;top:120px">ARN</s><svg style="left:359px;top:129px;width:5px;height:5px"><use href="#c"/></svg><s style="left:365px;top:128px">arn:aws:iam::941103729418:group/develo</s><s style="left:365px;top:136px">pers</s>
<s style="left:118px;top:167px;color:#5f6b77">Users (1)</s><a style="left:152px;top:167px;text-decoration:none;font-weight:700">Permissions</a><s style="left:194px;top:167px;color:#5f6b77">Access Advisor</s>
<i style="left:112px;top:181px;width:356px;height:.7px;background:#a9b2ba"></i><i style="left:145.500px;top:180px;width:40px;height:1.300px;background:#0b6aa8"></i>
<i style="left:112px;top:187px;width:356px;height:96px;background:#fff;box-shadow:0 .6px 1px #b8bec4"></i>
<b class="h" style="left:118px;top:194px">Permissions policies <span style="font-weight:400;color:#5f6b77">(2)</span></b><a style="left:189px;top:195px;font-size:4.400px">Info</a>
<s class="m" style="left:118px;top:204px;font-size:4.400px">You can attach up to 10 managed policies.</s>
<i class="btn" style="left:300px;top:193px;width:17px;height:10px;border-left:0;border-bottom:0;border-right:0"></i><svg style="left:306px;top:195px"><use href="#r"/></svg>
<s class="btn" style="left:320px;top:193px;width:42px;height:10px;border-bottom:0;border-right:0">Simulate ↗</s>
<s class="btn off" style="left:365px;top:193px;width:32px;height:10px;border-bottom:0;border-left:0;border-right:0">Remove</s>
<s class="btn" style="left:401px;top:193px;width:61px;height:10px;border-left:0;border-bottom:0">Add permissions ▾</s>
<s style="left:269px;top:216px">Filter by Type</s>
<svg style="left:121px;top:228px"><use href="#s"/></svg><s class="m" style="left:129px;top:227px">Search</s>
<i style="left:265.500px;top:226px;width:78px;height:10px;border-left:.7px solid #8d99a5;border-right:.7px solid #8d99a5"></i><s style="left:272px;top:227px">All types</s><s class="d" style="left:335px;top:227px">▼</s>
<s style="left:424px;top:227px;color:#aaa">‹</s><s style="left:433px;top:227px">1</s><s style="left:443px;top:227px;color:#aaa">›</s><svg style="left:454px;top:228px"><use href="#g"/></svg>
<i style="left:112px;top:242px;width:356px;height:14px;background:#fafafa"></i>
<i class="ck" style="left:119px;top:246.500px;border-color:#ddd"></i><b style="left:137px;top:245px">Policy name ⧉</b><s class="d" style="left:234px;top:245px">▲</s><i class="dv" style="left:243px;top:245.500px"></i><b style="left:250px;top:245px">Type</b><s class="d" style="left:346px;top:245px">▼</s><i class="dv" style="left:355px;top:245.500px"></i><b style="left:363px;top:245px">Attached entities</b><s class="d" style="left:459px;top:245px">▼</s>
<i class="ck" style="left:119px;top:260.500px"></i><i class="pi" style="left:139px;top:260.500px"></i><i class="gd" style="left:151px;top:259.500px"></i><a style="left:157px;top:259px">AmazonEC2FullAccess</a><s style="left:250px;top:259px">AWS managed</s><a style="left:364px;top:259px;color:#2b3440">1</a>
<i class="ln" style="left:112px;top:270px;width:356px"></i>
<i class="ck" style="left:119px;top:274.500px"></i><i class="pi" style="left:139px;top:274.500px"></i><i class="gd" style="left:151px;top:273.500px"></i><a style="left:157px;top:273px">EC2InstanceConnect</a><s style="left:250px;top:273px">AWS managed</s><a style="left:364px;top:273px;color:#2b3440">1</a>
<i style="left:482px;top:48px;width:15px;height:241px;background:#fff;border-left:.6px solid #e5e5e5"></i><svg style="left:486px;top:52px"><use href="#g"/></svg><svg style="left:486px;top:66px"><use href="#g"/></svg>
<i style="left:497px;top:23px;width:3px;height:266px;background:#d0d0d0"></i>
<i class="ft"></i><svg style="left:6px;top:291.500px;color:#ddd"><use href="#t"/></svg><s class="fo" style="left:13px">CloudShell</s><s class="fo" style="left:42px">Feedback</s>
<s class="fo" style="left:306px">© 2024, Amazon Web Services, Inc. or its affiliates.</s><s class="fo" style="left:412px">Privacy</s><s class="fo" style="left:434px">Terms</s><s class="fo" style="left:454px">Cookie preferences</s>
</div>

<!-- win3 behind EC2 -->
<div class="w" style="left:1067px;width:63px">
<i style="left:0;top:48px;width:63px;height:241px;background:#fff"></i><i class="nb"></i><i class="fb"></i>
<s class="aw">aws</s><i class="sm"></i><svg style="left:29px;top:27px;color:#e6e6e6;stroke-width:1.200"><use href="#m"/></svg><s class="n" style="left:37px">Services</s>
<i class="ico" style="left:7px;background:#d9772a"></i><s class="nf" style="left:17px">EC2</s><i class="ico" style="left:30px;background:#4fa53f"></i><s class="nf" style="left:40px">S3</s><i class="ico" style="left:52px;background:#d23a4a"></i>
<div class="nvl" style="top:53.500px"><p>EC2 Dashboard</p><p>EC2 Global View</p><p>Events</p><p>Console-to-Code <em>Preview</em></p><h6>Instances</h6><p>Instances</p><p>Instance Types</p><p class="f">Launch Templates</p><p>Spot Requests</p><p>Savings Plans</p><p>Reserved Instances</p><p>Dedicated Hosts</p><p>Capacity Reservations</p><h6>Images</h6><p>AMIs</p><p>AMI Catalog</p><h6>Elastic Block Store</h6><p>Volumes</p><p>Snapshots</p><p>Lifecycle Manager</p><h6>Network &amp; Security</h6></div>
<i class="ft"></i><svg style="left:6px;top:291.500px;color:#ddd"><use href="#t"/></svg><s class="fo" style="left:13px">CloudShell</s><s class="fo" style="left:42px">Feedback</s>
</div>

<!-- win3 front instances 1/2 -->
<div class="w" style="left:1130px;width:470px">
<i style="left:0;top:38px;width:470px;height:251px;background:#fff"></i><i class="nb" style="height:15px"></i>
<s class="aw">aws</s><i class="sm"></i><svg style="left:29px;top:27px;color:#e6e6e6;stroke-width:1.200"><use href="#m"/></svg><s class="n" style="left:37px">Services</s>
<i class="sr"></i><svg style="left:63px;top:27.500px;color:#ccc"><use href="#s"/></svg><s class="n" style="left:71px;color:#8b96a1">Search</s><s class="n" style="left:218px;color:#8b96a1">[Option+S]</s>
<svg style="left:297px;top:28px;color:#e6e6e6"><use href="#t"/></svg><svg style="left:314px;top:28px;color:#e6e6e6"><use href="#b"/></svg><svg style="left:332px;top:28px;color:#e6e6e6"><use href="#h"/></svg><svg style="left:349px;top:28px;color:#e6e6e6"><use href="#g"/></svg>
<s class="n" style="left:366px">N. Virginia ▾</s><s class="n" style="left:403px">vinodee-prod (0-7723-4083) ▾</s>
<div class="nvl" style="top:43.500px"><p>EC2 Dashboard</p><p>EC2 Global View</p><p>Events</p><p>Console-to-Code <em>Preview</em></p><h6>Instances</h6><p class="a">Instances</p><p>Instance Types</p><p>Launch Templates</p><p>Spot Requests</p><p class="f">Savings Plans</p><p>Reserved Instances</p><p>Dedicated Hosts</p><p class="f">Capacity Reservations</p><h6>Images</h6><p>AMIs</p><p>AMI Catalog</p><h6>Elastic Block Store</h6><p>Volumes</p><p class="f">Snapshots</p><p>Lifecycle Manager</p><h6>Network &amp; Security</h6><p>Security Groups</p></div>
<svg style="left:66px;top:46px"><use href="#x"/></svg>
<i style="left:80px;top:38px;width:2.500px;height:155px;background:#c6c6c6"></i>
<b class="h" style="left:90px;top:42px">Instances <span style="font-weight:400;color:#5f6b77">(1/2)</span></b><a style="left:140px;top:43px;font-size:4.400px;text-decoration:none">Info</a>
<i class="btn" style="left:229.500px;top:41px;width:16.500px;height:10px"></i><svg style="left:235px;top:43.500px"><use href="#c"/></svg>
<s class="btn" style="left:250px;top:41px;width:33px;height:10px;border-left:0;border-right:0;border-top:0">Connect</s>
<s class="btn" style="left:287px;top:41px;width:52px;height:10px">Instance state ▾</s>
<s class="btn" style="left:343.500px;top:41px;width:36.500px;height:10px">Actions ▾</s>
<s class="or" style="left:385px;top:41px;width:54px;height:10px">Launch instances</s><s class="or" style="left:439.500px;top:41px;width:10px;height:10px">▾</s>
<svg style="left:460px;top:41px"><use href="#g"/></svg>
<i style="left:90px;top:54px;width:220px;height:10px;border:.6px solid #9aa5af;border-left-color:#ddd;border-top-color:#ddd"></i><svg style="left:93px;top:56px"><use href="#s"/></svg><s class="m" style="left:101px;top:55px">Find Instance by attribute or tag (case-sensitive)</s>
<s class="btn" style="left:315px;top:54px;width:34px;height:10px">All states ▾</s>
<s style="left:412px;top:54px;color:#aaa">‹</s><s style="left:420px;top:54px">1</s><s style="left:431px;top:54px;color:#aaa">›</s><svg style="left:441.500px;top:55px"><use href="#g"/></svg>
<i class="ck" style="left:90px;top:69.500px;background:#0b6aa8;border-color:#0b6aa8"></i>
<b style="left:107px;top:68px;color:#414d5c">Name ∠</b><s class="d" style="left:141px;top:68px">▼</s><i class="dv" style="left:150px;top:68.500px"></i><b style="left:156px;top:68px;color:#414d5c">Instance ID</b><i class="dv" style="left:219px;top:68.500px"></i><b style="left:225px;top:68px;color:#414d5c">Instance state</b><s class="d" style="left:266px;top:68px">▼</s><b style="left:281px;top:68px;color:#414d5c">Instance type</b><s class="d" style="left:318px;top:68px">▼</s><i class="dv" style="left:327px;top:68.500px"></i><b style="left:333px;top:68px;color:#414d5c">Status check</b><i class="dv" style="left:380px;top:68.500px"></i><b style="left:385px;top:68px;color:#414d5c">Alarm status</b><b style="left:430px;top:68px;color:#414d5c">Availability</b>
<i style="left:84px;top:77px;width:373px;height:12px;background:#f1faff;border-top:.7px solid #5bb0de;border-bottom:.7px solid #5bb0de"></i>
<i class="ck" style="left:90px;top:81px;background:#0b6aa8;border-color:#0b6aa8"></i><s style="left:107px;top:79.500px">dev-1</s><a style="left:156px;top:79.500px;text-decoration:none">i-03da898c6482555b7</a><svg style="left:225px;top:81px;width:5px;height:5px;color:#1d8102"><use href="#k"/></svg><s style="left:231px;top:80px;color:#1d8102">Running</s><svg style="left:254px;top:80.500px;width:5px;height:5px"><use href="#s"/></svg><svg style="left:262px;top:80.500px;width:5px;height:5px"><use href="#s"/></svg><s style="left:281px;top:79.500px">t2.micro</s><svg style="left:333px;top:80.500px;width:5px;height:5px;color:#1d8102"><use href="#k"/></svg><s style="left:340px;top:79.500px;color:#1d8102">2/2 checks passed</s><a style="left:385px;top:79.500px;text-decoration:none">View alarms</a><s style="left:414px;top:79.500px;font-size:7px">+</s><s style="left:430px;top:79.500px;width:26px;overflow:hidden">us-east-1c</s>
<i class="ck" style="left:90px;top:93px"></i><s style="left:107px;top:91px">prod-1</s><a style="left:156px;top:91px;text-decoration:none">i-08094a451030a2989</a><svg style="left:225px;top:92.500px;width:5px;height:5px;color:#1d8102"><use href="#k"/></svg><s style="left:231px;top:91.500px;color:#1d8102">Running</s><svg style="left:254px;top:92px;width:5px;height:5px"><use href="#s"/></svg><svg style="left:262px;top:92px;width:5px;height:5px"><use href="#s"/></svg><s style="left:281px;top:91px">t2.micro</s><svg style="left:333px;top:92px;width:5px;height:5px"><use href="#g"/></svg><s style="left:340px;top:91px;color:#687078">Initializing</s><a style="left:385px;top:91px;text-decoration:none">View alarms</a><s style="left:414px;top:91px;font-size:7px">+</s><s style="left:430px;top:91px;width:26px;overflow:hidden">us-east-1c</s>
<i style="left:84px;top:103.500px;width:146px;height:2px;background:#b8b8b8"></i><i style="left:230px;top:103.500px;width:226px;height:2px;background:#e5e5e5"></i>
<i style="left:83px;top:106px;width:373px;height:164px;background:#f0f1f1"></i>
<b class="h" style="left:90px;top:276px">i-03da898c6482555b7 (dev-1)</b><s style="left:455px;top:274px;font-size:7px;color:#687078">⌃</s>
<i class="ft"></i><svg style="left:5px;top:291.500px;color:#ddd"><use href="#t"/></svg><s class="fo" style="left:12px">CloudShell</s><s class="fo" style="left:41px">Feedback</s>
<s class="fo" style="left:280px">© 2024, Amazon Web Services, Inc. or its affiliates.</s><s class="fo" style="left:386px">Privacy</s><s class="fo" style="left:408px">Terms</s><s class="fo" style="left:429px">Cookie preferences</s>
</div>
</div>

<!-- ROW 3 -->
<div class="row" style="top:599.400px">
<i class="tb"></i><i class="ab"></i>
<i class="l" style="left:6px;background:#d9584c"></i><i class="l" style="left:12px;background:#d9a53c"></i><i class="l" style="left:18px;background:#4fa84a"></i>
<i class="tab" style="left:27px;width:65px"></i><i style="left:29px;top:3px;width:4px;height:4px;background:#c8742a"></i><s class="tt" style="left:35px">Instance details | EC2</s><s class="tt" style="left:85px">×</s><s class="tt" style="left:95px">+</s>
<s class="ur" style="left:42px">us-east-1.console.aws.amazon.com/ec2/home?region=us-east-1#InstanceDetails:instanceId=i-08094a451030a2989</s>
<i class="l" style="left:539px;background:#d9584c"></i><i class="l" style="left:545px;background:#d9a53c"></i><i class="l" style="left:551px;background:#4fa84a"></i>
<i class="tab" style="left:561px;width:60px"></i><i style="left:563px;top:3px;width:4px;height:4px;background:#b03030"></i><s class="tt" style="left:568px">Create policy | IAM | Global</s><s class="tt" style="left:616px">×</s><s class="tt" style="left:628px">+</s>
<s class="ur" style="left:576px">us-east-1.console.aws.amazon.com/iam/home?region=us-east-1#/policies/create?step=addPermissions</s>
<i class="l" style="left:1073px;background:#d9584c"></i><i class="l" style="left:1079px;background:#d9a53c"></i><i class="l" style="left:1085px;background:#4fa84a"></i>
<i class="tab" style="left:1094px;width:60px"></i><i style="left:1096px;top:3px;width:4px;height:4px;background:#b03030"></i><s class="tt" style="left:1103px">developers | IAM | Global</s><s class="tt" style="left:1150px">×</s><s class="tt" style="left:1162px">+</s>
<s class="ur" style="left:1110px">us-east-1.console.aws.amazon.com/iam/home?region=us-east-1#/groups/details/developers?section=permissions</s>
<!-- strip 500-533 -->
<i style="left:500px;top:23px;width:33px;height:15px;background:#151c27"></i><s class="n wi" style="left:501px">7723-4083</s>
<i style="left:500px;top:38px;width:33px;height:251px;background:#fff"></i><i style="left:509px;top:44px;width:5px;height:245px;background:#e2e2e2"></i><i style="left:518px;top:44px;width:4px;height:245px;background:#eaeaea"></i>
<svg style="left:520px;top:41px"><use href="#g"/></svg><i style="left:530px;top:48px;width:2.500px;height:81px;background:#c6c6c6"></i>
<i style="left:500px;top:289px;width:40px;height:11px;background:#1b2634"></i><s class="fo" style="left:501px">preferen</s>
<!-- strip 1033-1066 -->
<i style="left:1033px;top:23px;width:33px;height:15px;background:#151c27"></i><s class="n wi" style="left:1034px">7723-4083 ▾</s>
<i style="left:1033px;top:38px;width:33px;height:251px;background:#fff"></i><i style="left:1048px;top:44px;width:5px;height:245px;background:#e6e6e6"></i><i style="left:1060px;top:44px;width:4px;height:245px;background:#ececec"></i>
<svg style="left:1052px;top:41px"><use href="#g"/></svg>
<i style="left:1033px;top:289px;width:40px;height:11px;background:#1b2634"></i><s class="fo" style="left:1034px">preferences</s>
<!-- strip 1566+ -->
<i style="left:1566px;top:23px;width:34px;height:15px;background:#151c27"></i><s class="n wi" style="left:1568px">7723-4083 ▾</s>
<i style="left:1566px;top:38px;width:34px;height:251px;background:#fff"></i><i style="left:1574px;top:44px;width:4px;height:245px;background:#ececec"></i><svg style="left:1586px;top:41px"><use href="#g"/></svg><i style="left:1597px;top:38px;width:2.500px;height:92px;background:#c6c6c6"></i>
<i style="left:1566px;top:289px;width:34px;height:11px;background:#1b2634"></i><s class="fo" style="left:1567px">preferences</s>

<!-- r3 win1 instance summary -->
<div class="w" style="left:0;width:500px">
<i style="left:0;top:48px;width:500px;height:241px;background:#fff"></i><i class="nb"></i><i class="fb"></i>
<s class="aw">aws</s><i class="sm"></i><svg style="left:29px;top:27px;color:#e6e6e6;stroke-width:1.200"><use href="#m"/></svg><s class="n" style="left:37px">Services</s>
<i class="sr"></i><svg style="left:63px;top:27.500px;color:#ccc"><use href="#s"/></svg><s class="n" style="left:71px;color:#8b96a1">Search</s><s class="n" style="left:218px;color:#8b96a1">[Option+S]</s>
<svg style="left:360px;top:27px;color:#e6e6e6"><use href="#t"/></svg><svg style="left:378px;top:27px;color:#e6e6e6"><use href="#b"/></svg><svg style="left:395px;top:27px;color:#e6e6e6"><use href="#h"/></svg><svg style="left:412px;top:27px;color:#e6e6e6"><use href="#g"/></svg>
<s class="n" style="left:430px">N. Virginia ▾</s><s class="n" style="left:466px">Vinodee ▾</s>
<i class="ico" style="left:7px;background:#d9772a"></i><s class="nf" style="left:17px">EC2</s><i class="ico" style="left:30px;background:#4fa53f"></i><s class="nf" style="left:40px">S3</s><i class="ico" style="left:52px;background:#d23a4a"></i><s class="nf" style="left:61px">IAM</s>
<div class="nvl" style="top:53.700px"><p>EC2 Dashboard</p><p>EC2 Global View</p><p>Events</p><p>Console-to-Code <em>Preview</em></p><h6>Instances</h6><p>Instances</p><p>Instance Types</p><p class="f">Launch Templates</p><p>Spot Requests</p><p>Savings Plans</p><p>Reserved Instances</p><p>Dedicated Hosts</p><p>Capacity Reservations</p><h6>Images</h6><p>AMIs</p><p>AMI Catalog</p><h6>Elastic Block Store</h6><p>Volumes</p><p>Snapshots</p><p>Lifecycle Manager</p><h6>Network &amp; Security</h6></div>
<svg style="left:66px;top:56px"><use href="#x"/></svg>
<i style="left:80px;top:48px;width:2.500px;height:143px;background:#bcbcbc"></i>
<i style="left:83px;top:48px;width:399px;height:241px;background:#f2f3f3"></i>
<a style="left:92px;top:53px">EC2</a><s style="left:104px;top:52.500px;font-size:7px;color:#687078">›</s><a style="left:112px;top:53px">Instances</a><s style="left:136px;top:52.500px;font-size:7px;color:#687078">›</s><s style="left:143px;top:53px">i-08094a451030a2989</s>
<i style="left:92px;top:64px;width:381px;height:225px;background:#fff"></i>
<b class="h" style="left:98px;top:69.500px">Instance summary for i-08094a451030a2989 (prod-1)</b><a style="left:259px;top:70.500px;font-size:4.400px;text-decoration:none">Info</a><s class="m" style="left:98px;top:78px">Updated less than a minute ago</s>
<i class="dv" style="left:314px;top:69px;height:9px"></i><svg style="left:319px;top:70.500px"><use href="#r"/></svg><i class="dv" style="left:331px;top:69px;height:9px"></i><b style="left:341px;top:69.500px;color:#414d5c">Connect</b><i class="dv" style="left:367px;top:69px;height:9px"></i><b style="left:377px;top:69.500px;color:#414d5c">Instance state ▾</b><i class="dv" style="left:427px;top:69px;height:9px"></i><b style="left:434px;top:69.500px;color:#414d5c">Actions ▾</b>
<s class="m" style="left:98px;top:93px">Instance ID</s><svg style="left:100px;top:102px;width:5px;height:5px"><use href="#c"/></svg><s style="left:107px;top:101px">i-08094a451030a2989 (prod-1)</s>
<s class="m" style="left:223px;top:93px">Public IPv4 address</s><svg style="left:224px;top:102px;width:5px;height:5px"><use href="#c"/></svg><s style="left:231px;top:101px">54.164.209.209 |</s><a style="left:270px;top:101px;text-decoration:none">open address</a><svg style="left:302px;top:102px;width:5px;height:5px;color:#0b6aa8"><use href="#e"/></svg>
<s class="m" style="left:348px;top:93px">Private IPv4 addresses</s><svg style="left:349px;top:102px;width:5px;height:5px"><use href="#c"/></svg><s style="left:357px;top:101px">172.31.25.65</s>
<s class="m" style="left:98px;top:114px;color:#98a2ab">IPv6 address</s><s style="left:98px;top:121.500px">–</s>
<s class="m" style="left:223px;top:114px;color:#98a2ab">Instance state</s><svg style="left:223px;top:122.500px;width:5px;height:5px;color:#1d8102"><use href="#k"/></svg><s style="left:230px;top:121.500px;color:#1d8102">Running</s>
<s class="m" style="left:348px;top:114px">Public IPv4 DNS</s><svg style="left:349px;top:122.500px;width:5px;height:5px"><use href="#c"/></svg><s style="left:357px;top:121.500px;color:#16191f">ec2-54-164-209-209.compute-1.amazonaws.com</s>
<a style="left:350px;top:129.500px;text-decoration:none">open address</a><svg style="left:381px;top:130.500px;width:5px;height:5px;color:#0b6aa8"><use href="#e"/></svg>
<s class="m" style="left:98px;top:143px">Hostname type</s><s style="left:98px;top:151px;color:#16191f">IP name: ip-172-31-25-65.ec2.internal</s>
<s class="m" style="left:223px;top:143px">Private IP DNS name (IPv4 only)</s><svg style="left:224px;top:152px;width:5px;height:5px"><use href="#c"/></svg><s style="left:231px;top:151px">ip-172-31-25-65.ec2.internal</s>
<s class="m" style="left:98px;top:164px">Answer private resource DNS name</s><s style="left:98px;top:171px">IPv4 (A)</s>
<s class="m" style="left:223px;top:164px">Instance type</s><s style="left:223px;top:171px">t2.micro</s>
<s class="m" style="left:348px;top:164px;color:#98a2ab">Elastic IP addresses</s><s style="left:348px;top:171px">–</s>
<s class="m" style="left:98px;top:185px">Auto-assigned IP address</s><svg style="left:100px;top:193px;width:5px;height:5px"><use href="#c"/></svg><s style="left:108px;top:192px;color:#16191f">54.164.209.209 [Public IP]</s>
<s class="m" style="left:223px;top:185px">VPC ID</s><svg style="left:224px;top:193px;width:5px;height:5px"><use href="#c"/></svg><a style="left:232px;top:192px;text-decoration:none">vpc-0890d52787dbd16bf</a><svg style="left:289px;top:193px;width:5px;height:5px;color:#0b6aa8"><use href="#e"/></svg>
<s class="m" style="left:348px;top:185px">AWS Compute Optimizer finding</s><svg style="left:348px;top:193px;width:5px;height:5px;color:#0b6aa8"><use href="#g"/></svg><a style="left:355px;top:192px;text-decoration:none">Opt-in to AWS Compute Optimizer for recommend</a><a style="left:348px;top:200px;text-decoration:none">ations.</a><a style="left:352px;top:208px;text-decoration:none">Learn more</a><svg style="left:378px;top:209px;width:5px;height:5px;color:#0b6aa8"><use href="#e"/></svg>
<s class="m" style="left:98px;top:222px">IAM Role</s><s style="left:98px;top:230px;color:#aaa">–</s>
<s class="m" style="left:223px;top:222px">Subnet ID</s><svg style="left:224px;top:231px;width:5px;height:5px"><use href="#c"/></svg><a style="left:232px;top:230px;text-decoration:none">subnet-0f9bc9b57db8bdcd</a><svg style="left:297px;top:231px;width:5px;height:5px;color:#0b6aa8"><use href="#e"/></svg>
<s class="m" style="left:348px;top:222px">Auto Scaling Group name</s><s style="left:348px;top:230px;color:#aaa">–</s>
<s class="m" style="left:98px;top:243px">IMDSv2</s><s style="left:98px;top:251px;color:#16191f">Required</s>
<s class="m" style="left:223px;top:243px">Instance ARN</s><svg style="left:224px;top:252px;width:5px;height:5px"><use href="#c"/></svg><s style="left:223px;top:258.500px">arn:aws:ec2:us-east-1:941103729418:instance/i-</s><s style="left:223px;top:266.500px">08094a451030a2989</s>
<a style="left:99px;top:282px">Details</a><s style="left:129px;top:282px">Status and alarms</s><s style="left:185px;top:282px">Monitoring</s><s style="left:225px;top:282px">Security</s><s style="left:257px;top:282px">Networking</s><s style="left:299px;top:282px">Storage</s><s style="left:331px;top:282px">Tags</s>
<i style="left:482px;top:48px;width:15px;height:241px;background:#fff;border-left:.6px solid #e5e5e5"></i><svg style="left:486px;top:51px"><use href="#g"/></svg>
<i style="left:497px;top:38px;width:2.500px;height:100px;background:#c6c6c6"></i>
<i class="ft"></i><svg style="left:6px;top:291.500px;color:#ddd"><use href="#t"/></svg><s class="fo" style="left:13px">CloudShell</s><s class="fo" style="left:42px">Feedback</s>
<s class="fo" style="left:311px">© 2024, Amazon Web Services, Inc. or its affiliates.</s><s class="fo" style="left:416px">Privacy</s><s class="fo" style="left:438px">Terms</s><s class="fo" style="left:458px">Cookie preferences</s>
</div>

<!-- r3 win2 create policy -->
<div class="w" style="left:533px;width:500px">
<i style="left:0;top:48px;width:500px;height:241px;background:#fff"></i><i class="nb"></i><i class="fb"></i>
<s class="aw">aws</s><i class="sm"></i><svg style="left:29px;top:27px;color:#e6e6e6;stroke-width:1.200"><use href="#m"/></svg><s class="n" style="left:37px">Services</s>
<i class="sr"></i><svg style="left:63px;top:27.500px;color:#ccc"><use href="#s"/></svg><s class="n" style="left:71px;color:#8b96a1">Search</s><s class="n" style="left:219px;color:#8b96a1">[Option+S]</s>
<svg style="left:364px;top:27px;color:#e6e6e6"><use href="#t"/></svg><svg style="left:381px;top:27px;color:#e6e6e6"><use href="#b"/></svg><svg style="left:399px;top:27px;color:#e6e6e6"><use href="#h"/></svg><svg style="left:416px;top:27px;color:#e6e6e6"><use href="#g"/></svg>
<s class="n" style="left:433px">Global ▾</s><s class="n" style="left:463px">sheeraz.net ▾</s>
<i class="ico" style="left:7px;background:#d9772a"></i><s class="nf" style="left:17px">EC2</s><i class="ico" style="left:30px;background:#4fa53f"></i><s class="nf" style="left:40px">S3</s><i class="ico" style="left:52px;background:#d23a4a"></i><s class="nf" style="left:62px">IAM</s>
<i style="left:15px;top:48px;width:467px;height:241px;background:#f2f3f3"></i>
<i style="left:4px;top:52px;width:6px;height:.8px;background:#555"></i><i style="left:4px;top:54px;width:6px;height:.8px;background:#555"></i><i style="left:4px;top:56px;width:6px;height:.8px;background:#555"></i>
<i style="left:126px;top:48px;width:342px;height:204px;background:#fff;box-shadow:0 .6px 1px #b8bec4"></i>
<s class="m" style="left:139px;top:53px">Specify actions from the service(s) to be denied.</s>
<i style="left:139px;top:63px;width:158px;height:10px;border-left:.7px solid #8d99a5;border-right:.7px solid #8d99a5"></i><svg style="left:142px;top:65px"><use href="#s"/></svg><s class="m" style="left:150px;top:64px;font-style:italic">Filter Actions</s>
<s style="left:420px;top:62px">Effect</s><i class="ck" style="left:422px;top:72.500px;border-radius:50%"></i><s style="left:428px;top:71px">Allow</s><i class="ck" style="left:444px;top:72.500px;border-radius:50%;border:1.500px solid #0b6aa8"></i><s style="left:450px;top:71px">Deny</s>
<b style="left:139px;top:84px;font-weight:400;color:#2b3440">Manual actions</b><s style="left:175px;top:84px;color:#888">|</s><a style="left:178px;top:84px;text-decoration:none">Add actions</a>
<i class="ck" style="left:139px;top:94.500px;background:#0b6aa8;border-color:#0b6aa8"></i><s style="left:147px;top:93px">All EC2 Instance Connect actions (ec2-instance-connect:*)</s>
<b style="left:139px;top:106px">Access level</b><a style="left:409px;top:106px;text-decoration:none">Expand all | Collapse all</a>
<s class="d" style="left:140px;top:116px">▶</s><s style="left:146px;top:116px">Write <span style="color:#0b6aa8">(Selected 1/6)</span></s>
<i class="ln" style="left:130px;top:132px;width:332px"></i>
<s class="d" style="left:133px;top:137px">▼</s><s style="left:139px;top:137px">Resources</s>
<s style="left:139px;top:149px">Specify resource ARNs for these actions.</s>
<i class="ck" style="left:139px;top:159.500px;border-radius:50%"></i><s style="left:147px;top:158px">All</s>
<i class="ck" style="left:139px;top:169px;border-radius:50%;border:1.500px solid #0b6aa8"></i><s style="left:147px;top:167.500px">Specific ▸</s>
<b style="left:139px;top:180.500px">instance</b><a style="left:164px;top:180.500px;font-size:4.400px">Info</a>
<s style="left:221px;top:179.500px;color:#8d6605;font-size:7px">△</s><s style="left:228px;top:180.500px;color:#8d6605">Specified instance resource ARN for the SendSSHPublicKey and 1 more actions.</s><a style="left:221px;top:189.500px;text-decoration:none">Add ARNs</a><s style="left:244px;top:189.500px">to restrict access.</s>
<i class="ck" style="left:414px;top:181.500px;border-color:#ddd"></i><s style="left:421px;top:180px">Any in this</s><s style="left:421px;top:188px">account</s>
<b style="left:139px;top:200.500px">instance-connect-endpoint</b><a style="left:210px;top:200.500px;font-size:4.400px">Info</a>
<s style="left:221px;top:199.500px;color:#8d6605;font-size:7px">△</s><s style="left:228px;top:200.500px;color:#8d6605">Specified instance-connect-endpoint resource ARN for the OpenTunnel action.</s><a style="left:221px;top:209.500px;text-decoration:none">Add ARNs</a><s style="left:244px;top:209.500px">to restrict access.</s>
<i class="ck" style="left:414px;top:201.500px"></i><s style="left:421px;top:200px">Any in this</s><s style="left:421px;top:208px">account</s>
<i class="ln" style="left:130px;top:223px;width:332px"></i>
<s class="d" style="left:133px;top:229px">▶</s><s style="left:139px;top:229px">Request conditions <span style="color:#6b7580">- optional</span></s>
<s style="left:139px;top:238px;color:#5f6b77">Actions on resources are allowed or denied only when these conditions are met.</s>
<s class="btn" style="left:126px;top:256px;width:73px;height:10.500px;line-height:10px;border:0;box-shadow:0 .6px 1px #b8bec4">+ Add more permissions</s>
<i style="left:126px;top:272px;width:342px;height:16px;background:#fff"></i>
<svg style="left:130px;top:276.500px;width:5px;height:5px;color:#aaa"><use href="#g"/></svg><s style="left:137px;top:275px;color:#a6afb7">Security: 0</s><svg style="left:168px;top:276.500px;width:5px;height:5px;color:#aaa"><use href="#g"/></svg><s style="left:175px;top:275px;color:#a6afb7">Errors: 0</s><s style="left:202px;top:274px;color:#a6afb7;font-size:7px">△</s><s style="left:209px;top:275px;color:#a6afb7">Warnings: 0</s><i style="left:244px;top:276px;width:4px;height:5px;background:#414d5c;border-radius:2px"></i><s style="left:250px;top:275px">Suggestions: 2</s>
<i style="left:482px;top:48px;width:15px;height:241px;background:#fff;border-left:.6px solid #e5e5e5"></i><svg style="left:486px;top:51px"><use href="#g"/></svg><svg style="left:486px;top:66px"><use href="#g"/></svg>
<i style="left:497px;top:107px;width:2.500px;height:178px;background:#c6c6c6"></i>
<i class="ft"></i><svg style="left:6px;top:291.500px;color:#ddd"><use href="#t"/></svg><s class="fo" style="left:13px">CloudShell</s><s class="fo" style="left:42px">Feedback</s>
<s class="fo" style="left:306px">© 2024, Amazon Web Services, Inc. or its affiliates.</s><s class="fo" style="left:412px">Privacy</s><s class="fo" style="left:434px">Terms</s><s class="fo" style="left:454px">Cookie preferences</s>
</div>

<!-- r3 win3 dev policy created -->
<div class="w" style="left:1066px;width:500px">
<i style="left:0;top:48px;width:500px;height:241px;background:#fff"></i><i class="nb"></i><i class="fb"></i>
<s class="aw">aws</s><i class="sm"></i><svg style="left:29px;top:27px;color:#e6e6e6;stroke-width:1.200"><use href="#m"/></svg><s class="n" style="left:38px">Services</s>
<i class="sr"></i><svg style="left:63px;top:27.500px;color:#ccc"><use href="#s"/></svg><s class="n" style="left:72px;color:#8b96a1">Search</s><s class="n" style="left:219px;color:#8b96a1">[Option+S]</s>
<svg style="left:365px;top:27px;color:#e6e6e6"><use href="#t"/></svg><svg style="left:382px;top:27px;color:#e6e6e6"><use href="#b"/></svg><svg style="left:399px;top:27px;color:#e6e6e6"><use href="#h"/></svg><svg style="left:415px;top:27px;color:#e6e6e6"><use href="#g"/></svg>
<s class="n" style="left:433px">Global ▾</s><s class="n" style="left:463px">sheeraz.net ▾</s>
<i class="ico" style="left:8px;background:#d9772a"></i><s class="nf" style="left:17px">EC2</s><i class="ico" style="left:31px;background:#4fa53f"></i><s class="nf" style="left:41px">S3</s><i class="ico" style="left:52px;background:#d23a4a"></i><s class="nf" style="left:62px">IAM</s>
<b class="h" style="left:11px;top:54.500px">Identity and Access</b><b class="h" style="left:11px;top:62.500px">Management (IAM)</b><svg style="left:80px;top:56px"><use href="#x"/></svg>
<i class="ln" style="left:0;top:77px;width:94px"></i>
<i style="left:11px;top:84px;width:72px;height:12px;border:.6px solid #a0aab4;border-bottom-color:#eee;border-right-color:#eee"></i><svg style="left:14px;top:87.500px"><use href="#s"/></svg><s class="m" style="left:22px;top:86.500px">Search IAM</s>
<i class="ln" style="left:11px;top:104px;width:74px"></i>
<div class="nvl" style="top:111.300px"><p>Dashboard</p><h6>Access management</h6><p class="a">User groups</p><p>Users</p><p>Roles</p><p>Policies</p><p>Identity providers</p><p>Account settings</p><h6>Access reports</h6><p>Access Analyzer</p><p class="in">External access</p><p class="in">Unused access</p><p class="in">Analyzer settings</p><p>Credential report</p><p>Organization activity</p><p>Service control policies</p></div>
<i style="left:94px;top:48px;width:2.500px;height:194px;background:#bcbcbc"></i>
<i style="left:98px;top:48px;width:384px;height:241px;background:#f2f3f3"></i>
<i class="gn" style="left:98px;width:384px"></i><svg style="left:103px;top:53.500px;color:#dff5d8"><use href="#k"/></svg><b style="left:111px;top:52.500px;color:#e9f7e4">Policy deny-prod-ssh created.</b><svg style="left:471px;top:53.500px;color:#fff"><use href="#x"/></svg>
<i style="left:111px;top:72px;width:358px;height:58px;background:#fff;box-shadow:0 .6px 1px #b8bec4"></i>
<b class="h" style="left:118.500px;top:78.500px">Summary</b><s class="btn" style="left:438.500px;top:77px;width:23.500px;height:11px;line-height:10px">Edit</s>
<s style="left:118.500px;top:99px">User group name</s><s style="left:118.500px;top:107px">developers</s>
<s style="left:238.500px;top:99px">Creation time</s><s style="left:238.500px;top:107px">July 05, 2024, 19:31 (UTC-06:00)</s>
<s style="left:357.500px;top:99px">ARN</s><svg style="left:360px;top:108px;width:5px;height:5px"><use href="#c"/></svg><s style="left:366.500px;top:107px">arn:aws:iam::941103729418:group/develo</s><s style="left:366.500px;top:115px">pers</s>
<s style="left:118.500px;top:146.500px;color:#5f6b77">Users (1)</s><a style="left:153px;top:146.500px;text-decoration:none;font-weight:700">Permissions</a><s style="left:194px;top:146.500px;color:#5f6b77">Access Advisor</s>
<i style="left:111px;top:160px;width:358px;height:.7px;background:#a9b2ba"></i><i style="left:146px;top:159px;width:40px;height:1.300px;background:#0b6aa8"></i>
<i style="left:111px;top:167px;width:358px;height:110px;background:#fff;box-shadow:0 .6px 1px #b8bec4"></i>
<b class="h" style="left:118.500px;top:173.500px">Permissions policies <span style="font-weight:400;color:#5f6b77">(3)</span></b><a style="left:190px;top:174.500px;font-size:4.400px">Info</a>
<s class="m" style="left:118.500px;top:183.500px;font-size:4.400px">You can attach up to 10 managed policies.</s>
<svg style="left:306px;top:174.500px"><use href="#r"/></svg>
<s class="btn" style="left:320px;top:172px;width:46px;height:10px;border-bottom:0;border-right:0;border-top:0">Simulate ↗</s>
<s class="btn off" style="left:366px;top:172px;width:31px;height:10px;border-bottom:0;border-top:0;border-right:0">Remove</s>
<s class="btn" style="left:399px;top:172px;width:63px;height:10px;border-left:0;border-bottom:0;border-top:0">Add permissions ▾</s>
<s style="left:270px;top:195px">Filter by Type</s>
<svg style="left:122px;top:207px"><use href="#s"/></svg><s class="m" style="left:130px;top:206px">Search</s>
<i style="left:266.500px;top:205px;width:77.500px;height:10px;border-left:.7px solid #8d99a5;border-right:.7px solid #8d99a5"></i><s style="left:273px;top:206px">All types</s><s class="d" style="left:336px;top:206px">▼</s>
<s style="left:424px;top:206px;color:#aaa">‹</s><s style="left:433px;top:206px">1</s><s style="left:444px;top:206px;color:#aaa">›</s><svg style="left:455px;top:207px"><use href="#g"/></svg>
<i style="left:111px;top:221px;width:358px;height:14px;background:#fafafa"></i>
<i class="ck" style="left:120px;top:226px;border-color:#ddd"></i><b style="left:137px;top:224.500px">Policy name ⧉</b><s class="d" style="left:234px;top:224.500px">▲</s><i class="dv" style="left:243px;top:225px"></i><b style="left:250.500px;top:224.500px">Type</b><s class="d" style="left:347px;top:224.500px">▼</s><i class="dv" style="left:356px;top:225px"></i><b style="left:363px;top:224.500px">Attached entities</b><s class="d" style="left:459px;top:224.500px">▼</s>
<i class="ck" style="left:120px;top:239.500px"></i><i class="pi" style="left:141px;top:239.500px"></i><i class="gd" style="left:153.500px;top:238.500px"></i><a style="left:158px;top:238px">AmazonEC2FullAccess</a><s style="left:250.500px;top:238px">AWS managed</s><a style="left:364px;top:238px;color:#2b3440">1</a>
<i class="ln" style="left:111px;top:249px;width:358px"></i>
<i class="ck" style="left:120px;top:253.500px"></i><i class="pi" style="left:141px;top:253.500px"></i><a style="left:158px;top:252px">deny-prod-ssh</a><s style="left:250.500px;top:252px">Customer inline</s><s style="left:364px;top:252px">1</s>
<i class="ln" style="left:111px;top:263px;width:358px"></i>
<i class="ck" style="left:120px;top:267.500px"></i><i class="pi" style="left:141px;top:267.500px"></i><i class="gd" style="left:153.500px;top:266.500px"></i><a style="left:158px;top:266px">EC2InstanceConnect</a><s style="left:250.500px;top:266px">AWS managed</s><a style="left:364px;top:266px;color:#2b3440">1</a>
<i style="left:482px;top:48px;width:15px;height:241px;background:#fff;border-left:.6px solid #e5e5e5"></i><svg style="left:486.500px;top:52px"><use href="#g"/></svg><svg style="left:486.500px;top:66px"><use href="#g"/></svg>
<i style="left:497px;top:55px;width:2.500px;height:180px;background:#c6c6c6"></i>
<i class="ft"></i><svg style="left:8px;top:291.500px;color:#ddd"><use href="#t"/></svg><s class="fo" style="left:15px">CloudShell</s><s class="fo" style="left:44px">Feedback</s>
<s class="fo" style="left:307px">© 2024, Amazon Web Services, Inc. or its affiliates.</s><s class="fo" style="left:412px">Privacy</s><s class="fo" style="left:434px">Terms</s><s class="fo" style="left:454px">Cookie preferences</s>
</div>
</div>

</div>
</body></html>
